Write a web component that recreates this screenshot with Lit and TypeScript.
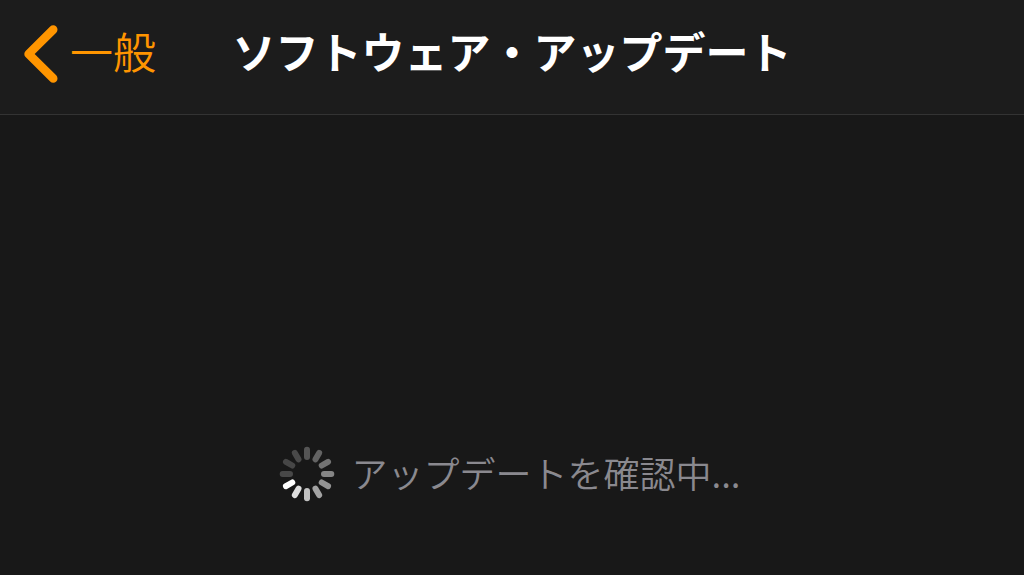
import { LitElement, html, css, svg } from "lit";
import { customElement, property } from "lit/decorators.js";

// Spoke shades, clockwise from twelve o'clock.
const SPOKES = [
  "#555555", "#636363", "#737373", "#858585", "#949494", "#a3a3a3",
  "#c2c2c2", "#dedede", "#ffffff", "#484848", "#464646", "#494949",
];

@customElement("activity-spinner")
class ActivitySpinner extends LitElement {
  static styles = css`
    :host { display: block; flex: none; width: 56px; height: 56px; }
    .wheel { display: block; width: 100%; height: 100%; }
  `;

  render() {
    return html`
      <svg class="wheel" viewBox="-28 -28 56 56" aria-hidden="true">
        ${SPOKES.map((shade, i) => svg`
          <line x1="0" y1="-17" x2="0" y2="-24.3" stroke=${shade}
            stroke-width="6" stroke-linecap="round" transform="rotate(${i * 30})"></line>`)}
      </svg>`;
  }
}

@customElement("nav-header")
class NavHeader extends LitElement {
  @property() heading = "";
  @property() back = "";

  static styles = css`
    :host { display: block; }
    .bar {
      display: grid;
      grid-template-columns: 1fr auto 1fr;
      align-items: center;
      padding: 20px 0 26px;
      background: #1c1c1c;
      border-bottom: 1px solid #333333;
    }
    .back {
      display: flex;
      align-items: center;
      gap: 12px;
      padding-left: 24px;
      color: #ff9500;
      text-decoration: none;
    }
    .chevron { display: block; flex: none; width: 34px; height: 58px; }
    .label, .title {
      margin: 0;
      padding-bottom: 8px;
      font-size: 43px;
      line-height: 60px;
      white-space: nowrap;
    }
    .label { font-weight: 350; }
    .title { color: #ffffff; font-weight: 700; }
  `;

  render() {
    return html`
      <header class="bar">
        <a class="back" href="#general">
          <svg class="chevron" viewBox="0 0 34 58" fill="none" stroke="currentColor"
            stroke-width="8.6" stroke-linecap="round" stroke-linejoin="round" aria-hidden="true">
            <path d="M29.2 4.6 4.6 29 29.2 53.4"></path>
          </svg>
          <span class="label">${this.back}</span>
        </a>
        <h1 class="title">${this.heading}</h1>
      </header>`;
  }
}

@customElement("app-root")
class AppRoot extends LitElement {
  static styles = css`
    :host {
      display: flex;
      flex-direction: column;
      min-height: 100vh;
      background: #181818;
      font-family: "Noto Sans CJK JP", "Liberation Sans", sans-serif;
    }
    .content {
      display: flex;
      justify-content: center;
      padding: 331px 4px 0 0;
    }
    .status {
      display: flex;
      align-items: center;
      gap: 16px;
    }
    .message {
      margin: 0;
      padding-bottom: 4px;
      color: #8a898f;
      font-size: 36px;
      line-height: 52px;
      font-weight: 350;
      white-space: nowrap;
    }
  `;

  render() {
    return html`
      <nav-header back="一般" heading="ソフトウェア・アップデート"></nav-header>
      <main class="content">
        <div class="status" role="status">
          <activity-spinner></activity-spinner>
          <p class="message">アップデートを確認中...</p>
        </div>
      </main>`;
  }
}
